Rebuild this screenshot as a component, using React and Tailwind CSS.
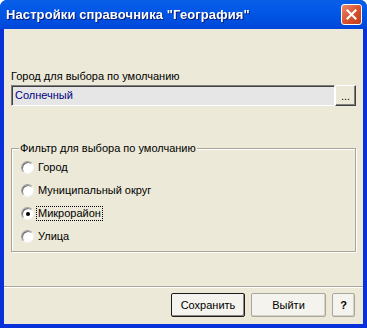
const font = { fontFamily: '"Liberation Sans", "DejaVu Sans", sans-serif' };

const Radio = ({ label, checked, focused }) => (
  <div className="flex items-center h-[23px]">
    <span className="relative w-[13px] h-[13px] rounded-full bg-white border border-t-[#a0a0a0] border-l-[#a0a0a0] border-r-[#f4f4f4] border-b-[#f4f4f4] shadow-[inset_1px_1px_0_#6f6f6f] flex items-center justify-center">
      {checked && <span className="w-[4px] h-[4px] rounded-full bg-black" />}
    </span>
    <span
      className={`ml-[3px] text-[11px] leading-[13px] text-black px-[1px] ${
        focused ? "outline outline-1 outline-dotted outline-black" : ""
      }`}
    >
      {label}
    </span>
  </div>
);

const Button = ({ children, className = "", def }) => (
  <button
    className={`h-[24px] bg-[#f4f3ee] text-[11px] text-black rounded-[2px] border ${
      def ? "border-[#1c1c1c] shadow-[inset_-1px_-1px_0_#8a8a8a]" : "border-[#a9a79c] shadow-[inset_-1px_-1px_0_#d6d0c5]"
    } ${className}`}
  >
    {children}
  </button>
);

export default function App() {
  const options = ["Город", "Муниципальный округ", "Микрорайон", "Улица"];
  return (
    <div className="w-[367px] h-[328px] flex flex-col bg-[#0831d9] rounded-t-[7px] overflow-hidden" style={font}>
      <div className="h-[29px] flex items-center justify-between pl-[6px] pr-[5px] bg-gradient-to-b from-[#0a5fe8] via-[#0055e5] to-[#0046d8]">
        <span className="text-white text-[13px] font-bold tracking-[0.1px] drop-shadow-[1px_1px_0_#0a1e7a]">
          Настройки справочника "География"
        </span>
        <div className="w-[21px] h-[21px] rounded-[3px] border border-white bg-gradient-to-br from-[#e98a6e] via-[#d9532f] to-[#c23b17] flex items-center justify-center">
          <svg width="11" height="11" viewBox="0 0 11 11">
            <path d="M1.5 1.5 L9.5 9.5 M9.5 1.5 L1.5 9.5" stroke="white" strokeWidth="2.2" strokeLinecap="square" />
          </svg>
        </div>
      </div>
      <div className="flex-1 ml-[4px] mr-[4px] mb-[4px] bg-[#ece9d8] flex flex-col">
        <div className="px-[7px] pt-[41px]">
          <div className="text-[11px] leading-[13px] text-black">Город для выбора по умолчанию</div>
          <div className="mt-[2px] flex h-[21px]">
            <div className="flex-1 bg-[#e6e6e6] border border-t-[#808080] border-l-[#808080] border-b-white border-r-white shadow-[inset_1px_1px_0_#404040] flex items-center pl-[3px] text-[11px] text-[#000080]">
              Солнечный
            </div>
            <div className="w-[21px] bg-[#ece9d8] border border-t-white border-l-white border-r-[#404040] border-b-[#404040] shadow-[inset_-1px_-1px_0_#808080] flex items-end justify-center pb-[3px] text-[11px] leading-[11px] text-black">
              ...
            </div>
          </div>
        </div>
        <div className="mx-[7px] mt-[42px] relative border border-[#a8a797] shadow-[inset_1px_1px_0_#ffffff,1px_1px_0_#ffffff] pt-[7px] pl-[9px] h-[104px]">
          <span className="absolute -top-[8px] left-[7px] bg-[#ece9d8] text-[11px] leading-[14px] text-black px-[1px]">
            Фильтр для выбора по умолчанию
          </span>
          {options.map((o, i) => (
            <Radio key={o} label={o} checked={i === 2} focused={i === 2} />
          ))}
        </div>
        <div className="flex-1" />
        <div className="border-t border-t-[#aca899] border-b border-b-white" />
        <div className="flex justify-end gap-[6px] pt-[5px] pb-[7px] pr-[8px]">
          <Button def className="w-[74px]">Сохранить</Button>
          <Button className="w-[75px]">Выйти</Button>
          <Button className="w-[23px] font-bold">?</Button>
        </div>
      </div>
    </div>
  );
}
